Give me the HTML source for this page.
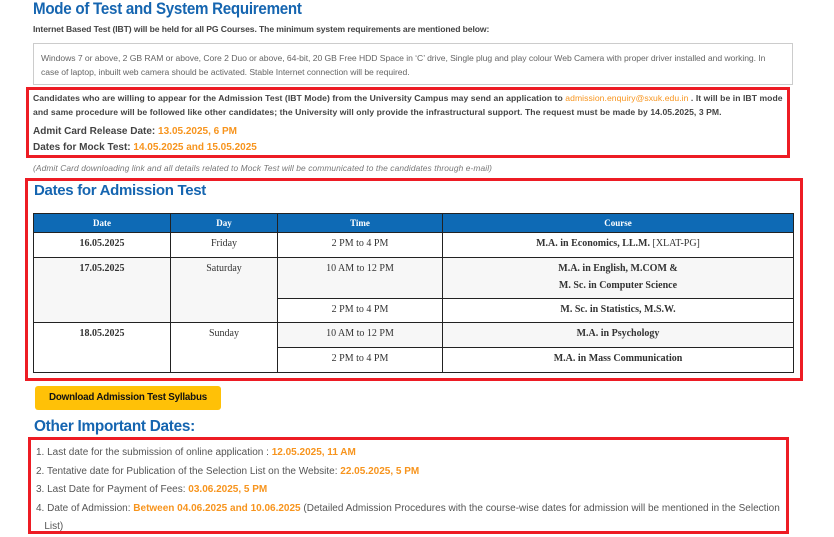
<!DOCTYPE html>
<html><head><meta charset="utf-8"><style>
*{margin:0;padding:0;box-sizing:border-box}
body{width:834px;height:537px;background:#fff;font-family:"Liberation Sans",sans-serif;color:#333;position:relative;overflow:hidden}
.a{position:absolute;white-space:nowrap}
h1{position:absolute;left:33px;top:-1px;font-size:17px;color:#1565b0;font-weight:bold;letter-spacing:-0.3px;white-space:nowrap;transform:scaleX(0.89);transform-origin:left top}
h2{position:absolute;font-size:15px;color:#1565b0;font-weight:bold;letter-spacing:-0.3px;white-space:nowrap}
.o{color:#f7941d;font-weight:bold}
.red{position:absolute;border:3px solid #ed1c24}
table{position:absolute;left:33px;top:213px;width:761px;border-collapse:collapse;font-family:"Liberation Serif",serif;font-size:10px;color:#333}
td,th{border:1px solid #222;text-align:center;vertical-align:top;padding-top:5px}
th{background:#0e6ab5;color:#fff;font-size:9px;height:19px;padding-top:4px}
td b{color:#333}
</style></head><body>
<h1>Mode of Test and System Requirement</h1>
<div class="a" style="left:33px;top:24px;font-size:8.6px;font-weight:bold;color:#444;letter-spacing:-0.1px">Internet Based Test (IBT) will be held for all PG Courses. The minimum system requirements are mentioned below:</div>
<div style="position:absolute;left:33px;top:43px;width:760px;height:42px;border:1px solid #ccc"></div>
<div class="a" style="left:41px;top:51px;font-size:8.6px;color:#666;letter-spacing:-0.05px;line-height:14px">Windows 7 or above, 2 GB RAM or above, Core 2 Duo or above, 64-bit, 20 GB Free HDD Space in ‘C’ drive, Single plug and play colour Web Camera with proper driver installed and working. In<br>case of laptop, inbuilt web camera should be activated. Stable Internet connection will be required.</div>
<div class="red" style="left:26px;top:87px;width:764px;height:71px"></div>
<div class="a" style="left:33px;top:92px;font-size:8.6px;font-weight:bold;color:#444;letter-spacing:0.06px;line-height:13.5px">Candidates who are willing to appear for the Admission Test (IBT Mode) from the University Campus may send an application to <span class="o" style="font-weight:normal">admission.enquiry@sxuk.edu.in</span> . It will be in IBT mode<br>and same procedure will be followed like other candidates; the University will only provide the infrastructural support. The request must be made by 14.05.2025, 3 PM.</div>
<div class="a" style="left:33px;top:126px;font-size:10px;font-weight:bold;color:#444">Admit Card Release Date: <span class="o">13.05.2025, 6 PM</span></div>
<div class="a" style="left:33px;top:142px;font-size:10px;font-weight:bold;color:#444">Dates for Mock Test: <span class="o">14.05.2025 and 15.05.2025</span></div>
<div class="a" style="left:33px;top:163px;font-size:8.4px;font-style:italic;color:#777;letter-spacing:0.1px">(Admit Card downloading link and all details related to Mock Test will be communicated to the candidates through e-mail)</div>
<div class="red" style="left:25px;top:178px;width:778px;height:203px"></div>
<h2 style="left:34px;top:182px">Dates for Admission Test</h2>
<table>
<tr><th style="width:137px">Date</th><th style="width:107px">Day</th><th style="width:165px">Time</th><th>Course</th></tr>
<tr style="height:25px"><td><b>16.05.2025</b></td><td>Friday</td><td>2 PM to 4 PM</td><td><b>M.A. in Economics, LL.M.</b> [XLAT-PG]</td></tr>
<tr style="height:41px;background:#f7f7f7"><td rowspan="2"><b>17.05.2025</b></td><td rowspan="2">Saturday</td><td>10 AM to 12 PM</td><td style="line-height:17px;padding-top:2px"><b>M.A. in English, M.COM &amp;<br>M. Sc. in Computer Science</b></td></tr>
<tr style="height:24px"><td>2 PM to 4 PM</td><td><b>M. Sc. in Statistics, M.S.W.</b></td></tr>
<tr style="height:25px;background:#f7f7f7"><td rowspan="2" style="background:#fff"><b>18.05.2025</b></td><td rowspan="2" style="background:#fff">Sunday</td><td>10 AM to 12 PM</td><td><b>M.A. in Psychology</b></td></tr>
<tr style="height:25px"><td>2 PM to 4 PM</td><td><b>M.A. in Mass Communication</b></td></tr>
</table>
<div style="position:absolute;left:35px;top:386px;width:186px;height:24px;background:#ffc107;border-radius:3px;font-size:9.8px;font-weight:bold;color:#111;text-align:center;line-height:24px;letter-spacing:-0.2px">Download Admission Test Syllabus</div>
<h2 style="left:34px;top:418px;font-size:16px;transform:scaleX(0.96);transform-origin:left top">Other Important Dates:</h2>
<div class="red" style="left:28px;top:437px;width:761px;height:97px"></div>
<div class="a" style="left:36px;top:444px;font-size:10px;color:#555;letter-spacing:0;line-height:18.5px">1. Last date for the submission of online application : <span class="o">12.05.2025, 11 AM</span><br>2. Tentative date for Publication of the Selection List on the Website: <span class="o">22.05.2025, 5 PM</span><br>3. Last Date for Payment of Fees: <span class="o">03.06.2025, 5 PM</span><br>4. Date of Admission: <span class="o">Between 04.06.2025 and 10.06.2025</span> (Detailed Admission Procedures with the course-wise dates for admission will be mentioned in the Selection<br>&nbsp;&nbsp;&nbsp;List)</div>
</body></html>
